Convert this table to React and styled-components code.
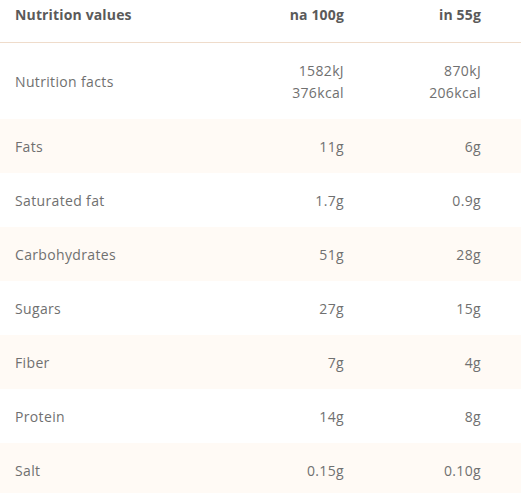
import React from "react";
import styled, { createGlobalStyle } from "styled-components";

const Global = createGlobalStyle`
  html, body { margin: 0; padding: 0; background: #fff; }
  body { font-family: "Open Sans", "Noto Sans", sans-serif; }
`;

const Table = styled.div`
  width: 521px;
  color: #707070;
  font-size: 14px;
  line-height: 22px;
  letter-spacing: 0.35px;
`;

const Row = styled.div`
  display: grid;
  grid-template-columns: 1fr 130px 137px;
  padding: 17px 40px 15px 15px;
  background: ${(p) => (p.$shaded ? "#fffaf5" : "#fff")};
`;

const HeaderRow = styled(Row)`
  padding: 4px 40px 16px 15px;
  border-bottom: 1px solid #efdccb;
  font-weight: 700;
  color: #5a5a5a;
  letter-spacing: 0.15px;
`;

const Label = styled.div`
  display: flex;
  align-items: center;
`;

const Value = styled.div`
  text-align: right;
`;

const rows = [
  ["Fats", "11g", "6g"],
  ["Saturated fat", "1.7g", "0.9g"],
  ["Carbohydrates", "51g", "28g"],
  ["Sugars", "27g", "15g"],
  ["Fiber", "7g", "4g"],
  ["Protein", "14g", "8g"],
  ["Salt", "0.15g", "0.10g"],
];

export default function App() {
  return (
    <>
      <Global />
      <Table>
        <HeaderRow>
          <Label>Nutrition values</Label>
          <Value>na 100g</Value>
          <Value>in 55g</Value>
        </HeaderRow>
        <Row>
          <Label>Nutrition facts</Label>
          <Value>1582kJ<br />376kcal</Value>
          <Value>870kJ<br />206kcal</Value>
        </Row>
        {rows.map(([l, a, b], i) => (
          <Row key={l} $shaded={i % 2 === 0}>
            <Label>{l}</Label>
            <Value>{a}</Value>
            <Value>{b}</Value>
          </Row>
        ))}
      </Table>
    </>
  );
}
